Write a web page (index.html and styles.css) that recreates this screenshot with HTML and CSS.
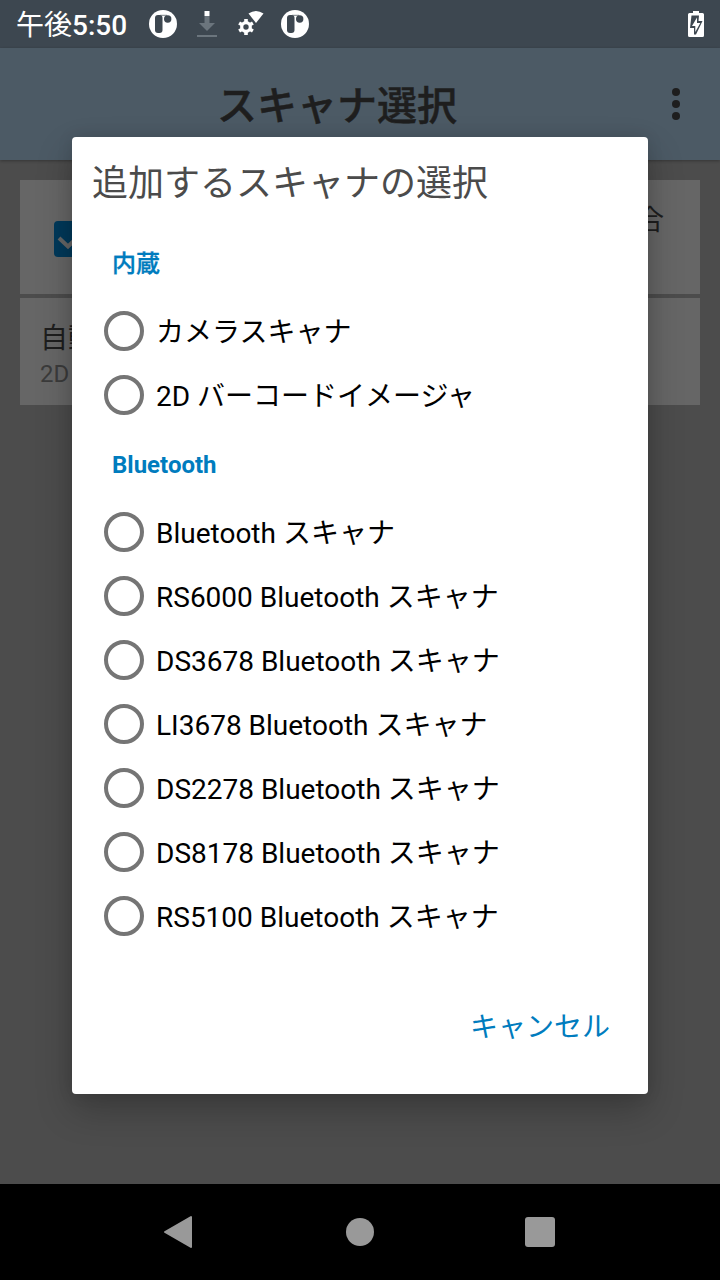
FILE: index.html
```
<!DOCTYPE html>
<html lang="ja">
<head>
<meta charset="utf-8">
<title>スキャナ選択</title>
<link rel="stylesheet" href="styles.css">
</head>
<body>
<div class="screen">
  <header class="status">
    <span class="clock">午後<b>5:50</b></span>
    <svg class="st-app" width="28" height="28" viewBox="0 0 28 28"><circle cx="14" cy="14" r="14" fill="#fff"/><rect x="6" y="5" width="7.500" height="18" rx="3" fill="#3d4750"/><path d="M11 5.300h7" stroke="#3d4750" stroke-width=".7"/><circle cx="18.700" cy="9" r="3.700" fill="#3d4750"/></svg>
    <svg class="st-down" width="20" height="28" viewBox="0 0 20 28"><path fill="#6b757d" d="M7.500 6h5v7H18l-8 8-8-8h5.500zM0 25h20v2H0z"/><path fill="#fff" d="M7.500 1h5v5h-5z"/></svg>
    <svg class="st-gear" width="26" height="26" viewBox="0 0 26 26"><path fill="#fff" d="M10.500 2.500q7.500-5 15 0L18 12z"/><g transform="translate(8 16)"><circle r="4.300" fill="none" stroke="#fff" stroke-width="3.200"/><g stroke="#fff" stroke-width="3.600"><path d="M0-8v3M0 8v-3M-6.900-4l2.600 1.500M6.900-4l-2.600 1.500M-6.900 4l2.600-1.500M6.900 4l-2.600-1.500"/></g></g></svg>
    <svg class="st-app2" width="28" height="28" viewBox="0 0 28 28"><circle cx="14" cy="14" r="14" fill="#fff"/><rect x="6" y="5" width="7.500" height="18" rx="3" fill="#3d4750"/><path d="M11 5.300h7" stroke="#3d4750" stroke-width=".7"/><circle cx="18.700" cy="9" r="3.700" fill="#3d4750"/></svg>
    <svg class="st-battery" width="16" height="26" viewBox="0 0 16 26"><path fill="#fff" d="M5 0h6v2h3.500q1.500 0 1.500 1.500v21q0 1.500-1.500 1.500h-13Q0 26 0 24.500v-21Q0 2 1.500 2H5z"/><path fill="#3d4750" d="M3.500 4.500H11l-.5 5.500h4L8 23.500H6V17H2z"/><path fill="#fff" d="M9 6.500 4 15h3.300v6L12.300 12H9z"/></svg>
  </header>
  <div class="appbar">
    <h1>スキャナ選択</h1>
    <svg class="more" width="8" height="32" viewBox="0 0 8 32" fill="#1e1e1e"><circle cx="4" cy="4" r="4"/><circle cx="4" cy="16" r="4"/><circle cx="4" cy="28" r="4"/></svg>
  </div>
  <main class="page">
    <div class="card first">
      <svg class="check" width="36" height="36" viewBox="0 0 36 36"><rect width="36" height="36" rx="4" fill="#00395a"/><path d="M5 17l9 8.500L31 9" fill="none" stroke="#666" stroke-width="4"/></svg>
      <span>合</span>
    </div>
    <div class="card second"><div class="name">自動</div><div class="sub">2D</div></div>
  </main>
  <nav class="nav">
    <svg width="30" height="34" viewBox="0 0 30 34"><path fill="#999" stroke="#999" stroke-width="2" stroke-linejoin="round" d="M28 2v30L2 17z"/></svg>
    <svg width="28" height="28" viewBox="0 0 28 28"><circle cx="14" cy="14" r="14" fill="#999"/></svg>
    <svg width="30" height="30" viewBox="0 0 30 30"><rect width="30" height="30" rx="3" fill="#999"/></svg>
  </nav>
  <section class="dialog">
    <h2>追加するスキャナの選択</h2>
    <h3 class="kanji">内蔵</h3>
    <div class="row"><i></i><span>カメラスキャナ</span></div>
    <div class="row"><i></i><span>2D バーコードイメージャ</span></div>
    <h3>Bluetooth</h3>
    <div class="row"><i></i><span>Bluetooth スキャナ</span></div>
    <div class="row"><i></i><span>RS6000 Bluetooth スキャナ</span></div>
    <div class="row"><i></i><span>DS3678 Bluetooth スキャナ</span></div>
    <div class="row"><i></i><span>LI3678 Bluetooth スキャナ</span></div>
    <div class="row"><i></i><span>DS2278 Bluetooth スキャナ</span></div>
    <div class="row"><i></i><span>DS8178 Bluetooth スキャナ</span></div>
    <div class="row"><i></i><span>RS5100 Bluetooth スキャナ</span></div>
    <div class="actions">キャンセル</div>
  </section>
</div>
</body>
</html>
```
FILE: styles.css
```
* { box-sizing: border-box; }
body { margin: 0; font-family: Roboto, "Noto Sans CJK JP", sans-serif; }
h1, h2, h3 { margin: 0; white-space: nowrap; }
svg { display: block; flex: none; }
.screen { position: relative; width: 720px; height: 1280px; overflow: hidden; display: flex; flex-direction: column; background: #4c4c4c; }
.status { height: 48px; flex: none; display: flex; align-items: center; padding: 0 16px; background: #3d4750; color: #fff; }
.clock { width: 133px; padding-top: 4px; font-size: 28px; line-height: 44px; white-space: nowrap; }
.clock b { font-weight: 500; }
.st-down { margin-left: 20px; }
.st-gear { margin-left: 21px; }
.st-app2 { margin-left: 17px; }
.st-battery { margin-left: auto; }
.appbar { height: 112px; flex: none; display: flex; align-items: center; padding: 0 40px 0 217px; background: #4c5a65; box-shadow: 0 1px 3px rgba(0,0,0,.3); }
.appbar h1 { padding-top: 6px; font-size: 40px; line-height: 60px; font-weight: 500; color: #1e1e1e; -webkit-text-stroke: .5px #1e1e1e; }
.more { margin-left: auto; }
.page { flex: 1; padding: 20px; display: flex; flex-direction: column; gap: 4px; }
.card { background: #666; color: #1e1e1e; font-size: 28px; }
.first { height: 114px; display: flex; justify-content: space-between; padding: 0 36px 0 34px; }
.first .check { margin-top: 41px; }
.first span { line-height: 40px; margin-top: 21px; }
.second { height: 107px; padding: 21px 20px; }
.name { line-height: 40px; }
.sub { font-size: 24px; line-height: 28px; margin-top: 1px; color: #3b3b3b; }
.nav { height: 96px; flex: none; display: flex; align-items: center; justify-content: space-between; padding: 0 165px 0 163px; background: #000; }
.nav svg:nth-child(2) { margin-left: 2px; }
.dialog { position: absolute; left: 72px; top: 137px; width: 576px; height: 957px; border-radius: 4px; background: #fff; box-shadow: 0 16px 36px rgba(0,0,0,.24), 0 0 16px rgba(0,0,0,.1); }
.dialog h2 { height: 89px; padding: 20px 0 0 20px; font-size: 36px; line-height: 54px; font-weight: 400; color: #4b4b4b; }
.dialog h3 { height: 73px; padding-left: 40px; font-size: 24px; line-height: 76px; font-weight: 700; color: #007cbe; }
.dialog .kanji { font-weight: 500; -webkit-text-stroke: .3px #007cbe; }
.row { height: 64px; display: flex; align-items: center; gap: 12px; padding-left: 32px; }
.row i { width: 40px; height: 40px; flex: none; border: 4px solid #757575; border-radius: 50%; }
.row span { padding-top: 4px; font-size: 28px; line-height: 40px; color: #000; white-space: nowrap; }
.actions { padding: 60px 38px 0 0; text-align: right; font-size: 28px; line-height: 40px; color: #007cbe; }
```
